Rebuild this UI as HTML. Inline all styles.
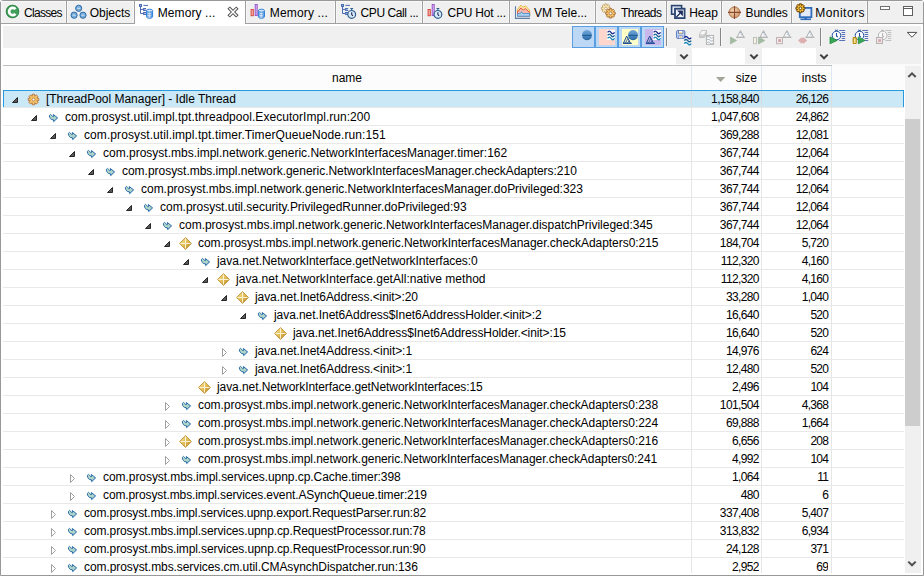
<!DOCTYPE html>
<html><head><meta charset="utf-8"><title>Memory Call Tree</title>
<style>
html,body{margin:0;padding:0;}
body{width:924px;height:576px;overflow:hidden;background:#fff;position:relative;font-family:"Liberation Sans",sans-serif;font-size:12px;color:#000;}
body>div,body>svg{position:absolute;box-sizing:content-box;}
.t{white-space:nowrap;}
svg{overflow:visible;}
</style></head><body><svg width="0" height="0" style="left:0;top:0"><defs><linearGradient id="dbg" x1="0" y1="0" x2="1" y2="0"><stop offset="0" stop-color="#5a9ce0"/><stop offset=".45" stop-color="#eef5fd"/><stop offset="1" stop-color="#3a86da"/></linearGradient><linearGradient id="dbg2" x1="0" y1="0" x2="1" y2="0"><stop offset="0" stop-color="#5a9ce0"/><stop offset=".45" stop-color="#eef5fd"/><stop offset="1" stop-color="#3a86da"/></linearGradient><radialGradient id="bg" cx=".4" cy=".4" r=".7"><stop offset="0" stop-color="#f8e0b8"/><stop offset="1" stop-color="#c88860"/></radialGradient><linearGradient id="sg" x1="0" y1="0" x2="0" y2="1"><stop offset="0" stop-color="#78a8d8"/><stop offset=".5" stop-color="#4a88c4"/><stop offset="1" stop-color="#2f70b0"/></linearGradient><linearGradient id="sg2" x1="0" y1="0" x2="0" y2="1"><stop offset="0" stop-color="#78a8d8"/><stop offset=".5" stop-color="#4a88c4"/><stop offset="1" stop-color="#2f70b0"/></linearGradient><linearGradient id="bl" x1="0" y1="0" x2="1" y2="1"><stop offset="0" stop-color="#c4e8c4"/><stop offset="1" stop-color="#9cc4cc"/></linearGradient><linearGradient id="dg" x1="0" y1="0" x2="1" y2="1"><stop offset="0" stop-color="#fbe8a4"/><stop offset=".5" stop-color="#e4be58"/><stop offset="1" stop-color="#b07e22"/></linearGradient></defs></svg><div style="left:0;top:0;width:922px;height:574px;border:1px solid #989898;border-radius:3px 3px 0 0;"></div><div style="left:1px;top:1px;width:922px;height:22px;background:#f0f0f0;"></div><div style="left:1px;top:1px;width:922px;height:1px;background:#f8f8f8;"></div><div style="left:1px;top:23px;width:922px;height:1px;background:#a0a0a0;"></div><div style="left:3px;top:26px;width:918px;height:22px;background:#f0f0f0;"></div><div style="left:3px;top:48px;width:918px;height:16px;background:#f0f0f0;"></div><div style="left:3px;top:64px;width:918px;height:2px;background:#fafafa;"></div><div style="left:3px;top:48px;width:673px;height:17px;background:#fff;"></div><div style="left:692px;top:48px;width:53px;height:17px;background:#fff;"></div><div style="left:762px;top:48px;width:54px;height:17px;background:#fff;"></div><div style="left:1px;top:1px;width:1px;height:22px;background:#f8f8f8;"></div><div style="left:65px;top:1px;width:1px;height:22px;background:#f8f8f8;"></div><div style="left:66px;top:1px;width:1px;height:23px;background:#a0a0a0;"></div><div class="t" style="left:24.0px;top:1px;line-height:24px;height:24px;letter-spacing:-0.68px;">Classes</div><div style="left:67px;top:1px;width:1px;height:22px;background:#f8f8f8;"></div><div style="left:133px;top:1px;width:1px;height:22px;background:#f8f8f8;"></div><div style="left:134px;top:1px;width:1px;height:23px;background:#a0a0a0;"></div><div class="t" style="left:89.7px;top:1px;line-height:24px;height:24px;">Objects</div><div style="left:135px;top:1px;width:110px;height:25px;background:#fff;"></div><div style="left:245px;top:1px;width:1px;height:23px;background:#a0a0a0;"></div><div class="t" style="left:157.7px;top:1px;line-height:24px;height:24px;letter-spacing:0.1px;">Memory ...</div><div style="left:246px;top:1px;width:1px;height:22px;background:#f8f8f8;"></div><div style="left:334px;top:1px;width:1px;height:22px;background:#f8f8f8;"></div><div style="left:335px;top:1px;width:1px;height:23px;background:#a0a0a0;"></div><div class="t" style="left:269.8px;top:1px;line-height:24px;height:24px;letter-spacing:0.15px;">Memory ...</div><div style="left:336px;top:1px;width:1px;height:22px;background:#f8f8f8;"></div><div style="left:421px;top:1px;width:1px;height:22px;background:#f8f8f8;"></div><div style="left:422px;top:1px;width:1px;height:23px;background:#a0a0a0;"></div><div class="t" style="left:360.6px;top:1px;line-height:24px;height:24px;letter-spacing:-0.42px;">CPU Call ...</div><div style="left:423px;top:1px;width:1px;height:22px;background:#f8f8f8;"></div><div style="left:508px;top:1px;width:1px;height:22px;background:#f8f8f8;"></div><div style="left:509px;top:1px;width:1px;height:23px;background:#a0a0a0;"></div><div class="t" style="left:447.5px;top:1px;line-height:24px;height:24px;letter-spacing:-0.22px;">CPU Hot ...</div><div style="left:510px;top:1px;width:1px;height:22px;background:#f8f8f8;"></div><div style="left:594px;top:1px;width:1px;height:22px;background:#f8f8f8;"></div><div style="left:595px;top:1px;width:1px;height:23px;background:#a0a0a0;"></div><div class="t" style="left:534.0px;top:1px;line-height:24px;height:24px;">VM Tele...</div><div style="left:596px;top:1px;width:1px;height:22px;background:#f8f8f8;"></div><div style="left:665px;top:1px;width:1px;height:22px;background:#f8f8f8;"></div><div style="left:666px;top:1px;width:1px;height:23px;background:#a0a0a0;"></div><div class="t" style="left:621.0px;top:1px;line-height:24px;height:24px;letter-spacing:-0.5px;">Threads</div><div style="left:667px;top:1px;width:1px;height:22px;background:#f8f8f8;"></div><div style="left:720px;top:1px;width:1px;height:22px;background:#f8f8f8;"></div><div style="left:721px;top:1px;width:1px;height:23px;background:#a0a0a0;"></div><div class="t" style="left:689.2px;top:1px;line-height:24px;height:24px;">Heap</div><div style="left:722px;top:1px;width:1px;height:22px;background:#f8f8f8;"></div><div style="left:790px;top:1px;width:1px;height:22px;background:#f8f8f8;"></div><div style="left:791px;top:1px;width:1px;height:23px;background:#a0a0a0;"></div><div class="t" style="left:745.6px;top:1px;line-height:24px;height:24px;letter-spacing:-0.2px;">Bundles</div><div style="left:792px;top:1px;width:1px;height:22px;background:#f8f8f8;"></div><div style="left:866px;top:1px;width:1px;height:22px;background:#f8f8f8;"></div><div style="left:867px;top:1px;width:1px;height:23px;background:#a0a0a0;"></div><div class="t" style="left:815.3px;top:1px;line-height:24px;height:24px;letter-spacing:0.45px;">Monitors</div><svg style="left:5px;top:4px" width="15" height="15" viewBox="0 0 15 15"><circle cx="7.5" cy="7.5" r="6.7" fill="#43a05c"/><circle cx="7.5" cy="7.5" r="6.2" fill="none" stroke="#2f8848" stroke-width="1"/><path d="M10.5 5.2 A3.6 3.6 0 1 0 10.5 9.8" fill="none" stroke="#fff" stroke-width="2.7"/></svg><svg style="left:70px;top:4px" width="17" height="15" viewBox="0 0 17 15"><circle cx="8.7" cy="4.3" r="3.1" fill="#79addb" stroke="#2f6ea8" stroke-width="1"/><path d="M7.199999999999999 4.3 H10.2" stroke="#cfe2f4" stroke-width="1"/><circle cx="4.1" cy="11.2" r="3.1" fill="#79addb" stroke="#2f6ea8" stroke-width="1"/><path d="M2.5999999999999996 11.2 H5.6" stroke="#cfe2f4" stroke-width="1"/><circle cx="13" cy="11.2" r="3.1" fill="#79addb" stroke="#2f6ea8" stroke-width="1"/><path d="M11.5 11.2 H14.5" stroke="#cfe2f4" stroke-width="1"/></svg><svg style="left:139px;top:4px" width="15" height="15" viewBox="0 0 15 15"><g transform="translate(0,0)"><path d="M1.5 3 V9.5 H4.5 M1.5 5.4 H4.5 M4.4 1.4 H9" fill="none" stroke="#4a6cb0" stroke-width="1"/><rect x="0.5" y="0.5" width="2" height="2" fill="#9ab0dc" stroke="#4a6cb0" stroke-width="1"/><rect x="4.6" y="4.5" width="2" height="2" fill="#9ab0dc" stroke="#4a6cb0" stroke-width="1"/><rect x="4.6" y="8.5" width="2" height="2" fill="#9ab0dc" stroke="#4a6cb0" stroke-width="1"/></g><g transform="translate(7,4.7)"><path d="M0.5 2 V7.8 C0.5 10.2 6.6 10.2 6.6 7.8 V2 Z" fill="url(#dbg)" stroke="#2f82d8" stroke-width="1"/><ellipse cx="3.55" cy="2" rx="3.05" ry="1.5" fill="#d4e6f8" stroke="#2f82d8" stroke-width="1"/><path d="M0.8 5 C2 6.2 5 6.2 6.3 5 M0.8 7.4 C2 8.6 5 8.6 6.3 7.4" fill="none" stroke="#3a86da" stroke-width=".6" opacity=".7"/></g></svg><svg style="left:250px;top:4px" width="16" height="15" viewBox="0 0 16 15"><g transform="translate(0.6,0)"><rect x="0.5" y="5.5" width="2.2" height="6.2" fill="#f8b8b0" stroke="#d8483c" stroke-width="1"/><rect x="4.6" y="0.5" width="2" height="11" fill="#d8b8f0" stroke="#9a58cc" stroke-width="1"/></g><g transform="translate(7.9,4.7)"><path d="M0.5 2 V7.8 C0.5 10.2 6.6 10.2 6.6 7.8 V2 Z" fill="url(#dbg2)" stroke="#2f82d8" stroke-width="1"/><ellipse cx="3.55" cy="2" rx="3.05" ry="1.5" fill="#d4e6f8" stroke="#2f82d8" stroke-width="1"/><path d="M0.8 5 C2 6.2 5 6.2 6.3 5 M0.8 7.4 C2 8.6 5 8.6 6.3 7.4" fill="none" stroke="#3a86da" stroke-width=".6" opacity=".7"/></g></svg><svg style="left:341px;top:4px" width="16" height="15" viewBox="0 0 16 15"><g transform="translate(0,0)"><path d="M1.5 3 V9.5 H4.5 M1.5 5.4 H4.5 M4.4 1.4 H9" fill="none" stroke="#4a6cb0" stroke-width="1"/><rect x="0.5" y="0.5" width="2" height="2" fill="#9ab0dc" stroke="#4a6cb0" stroke-width="1"/><rect x="4.6" y="4.5" width="2" height="2" fill="#9ab0dc" stroke="#4a6cb0" stroke-width="1"/><rect x="4.6" y="8.5" width="2" height="2" fill="#9ab0dc" stroke="#4a6cb0" stroke-width="1"/></g><g transform="translate(6.2,4)"><path d="M3.1 0.5 H5.9 M4.5 0.5 V2.2" stroke="#2b5f90" stroke-width="1.1"/><circle cx="4.5" cy="6.4" r="3.9" fill="#dbeaf8" stroke="#2b5f90" stroke-width="1.2"/><path d="M4.5 4.2 V6.6 L5.7 7.8" fill="none" stroke="#1a2a5a" stroke-width="1.1"/></g></svg><svg style="left:427px;top:4px" width="16" height="15" viewBox="0 0 16 15"><g transform="translate(0.6,0)"><rect x="0.5" y="5.5" width="2.2" height="6.2" fill="#f8b8b0" stroke="#d8483c" stroke-width="1"/><rect x="4.6" y="0.5" width="2" height="11" fill="#d8b8f0" stroke="#9a58cc" stroke-width="1"/></g><g transform="translate(6.4,4)"><path d="M3.1 0.5 H5.9 M4.5 0.5 V2.2" stroke="#2b5f90" stroke-width="1.1"/><circle cx="4.5" cy="6.4" r="3.9" fill="#dbeaf8" stroke="#2b5f90" stroke-width="1.2"/><path d="M4.5 4.2 V6.6 L5.7 7.8" fill="none" stroke="#1a2a5a" stroke-width="1.1"/></g></svg><svg style="left:515px;top:4px" width="16" height="15" viewBox="0 0 16 15"><path d="M2.5 12.2 V5.4 L5.9 1.2 L8.1 3.4 L10.4 1.9 L14.6 6.2 V12.2 Z" fill="#fcecb0" stroke="#e6b434" stroke-width="1"/><path d="M2.5 12.2 V8 L5.9 3.9 L8.1 6 L10.4 4.6 L14.6 8.4 V12.2 Z" fill="#f9b8ac" stroke="#e05446" stroke-width="1"/><path d="M2.5 12.2 V9.8 L5.4 9.6 L6.5 7.6 L7.7 9.6 L14.6 9.4 V12.2 Z" fill="#b0d4f2" stroke="#5696d0" stroke-width="1"/><path d="M0.5 2.2 V14.4 H15" fill="none" stroke="#5a7ea8" stroke-width="1.1"/></svg><svg style="left:600px;top:3px" width="17" height="17" viewBox="0 0 17 17"><g opacity="0.95"><path d="M4.99 0.89 L6.81 0.89 L7.14 2.63 L6.98 2.56 L8.44 1.57 L9.73 2.86 L8.74 4.32 L8.67 4.16 L10.41 4.49 L10.41 6.31 L8.67 6.64 L8.74 6.48 L9.73 7.94 L8.44 9.23 L6.98 8.24 L7.14 8.17 L6.81 9.91 L4.99 9.91 L4.66 8.17 L4.82 8.24 L3.36 9.23 L2.07 7.94 L3.06 6.48 L3.13 6.64 L1.39 6.31 L1.39 4.49 L3.13 4.16 L3.06 4.32 L2.07 2.86 L3.36 1.57 L4.82 2.56 L4.66 2.63 Z" fill="#fbecb4" stroke="#c09c68" stroke-width="0.9" stroke-linejoin="round"/><circle cx="5.9" cy="5.4" r="1.3" fill="#fff" stroke="#c09c68" stroke-width="0.9"/></g><g opacity="1"><path d="M9.53 5.50 L11.47 5.50 L11.82 7.35 L11.66 7.28 L13.21 6.22 L14.58 7.59 L13.52 9.14 L13.45 8.98 L15.30 9.33 L15.30 11.27 L13.45 11.62 L13.52 11.46 L14.58 13.01 L13.21 14.38 L11.66 13.32 L11.82 13.25 L11.47 15.10 L9.53 15.10 L9.18 13.25 L9.34 13.32 L7.79 14.38 L6.42 13.01 L7.48 11.46 L7.55 11.62 L5.70 11.27 L5.70 9.33 L7.55 8.98 L7.48 9.14 L6.42 7.59 L7.79 6.22 L9.34 7.28 L9.18 7.35 Z" fill="#f6c868" stroke="#a86c3c" stroke-width="0.9" stroke-linejoin="round"/><circle cx="10.5" cy="10.3" r="1.5" fill="#fff" stroke="#a86c3c" stroke-width="0.9"/></g></svg><svg style="left:670px;top:4px" width="16" height="16" viewBox="0 0 16 16"><rect x="1.6" y="1.6" width="10" height="8.6" fill="#e8eef8" stroke="#2a4470" stroke-width="1.6"/><rect x="5" y="4.7" width="9.6" height="9.4" fill="#f2f6fc" stroke="#2a4470" stroke-width="1.8"/><path d="M6.4 13 L11.4 8 M8.6 7.2 H12.2 V10.8 Z" fill="#1a2a58" stroke="#1a2a58" stroke-width="1.2"/></svg><svg style="left:728px;top:6px" width="14" height="14" viewBox="0 0 14 14"><circle cx="6.5" cy="6.4" r="5.5" fill="url(#bg)" stroke="#b07850" stroke-width="1"/><path d="M6.5 0 V13 M0 6.4 H13" stroke="#8a4830" stroke-width="1.1"/></svg><svg style="left:796px;top:3px" width="17" height="18" viewBox="0 0 17 18"><rect x="3.8" y="4.9" width="11.6" height="9.3" fill="#e2eafa" stroke="#2f6cbc" stroke-width="1.8"/><path d="M4.4 16.3 H15" stroke="#2f6cbc" stroke-width="1.6"/><path d="M8.4 14.5 H11 V16 H8.4Z" fill="#2f6cbc"/><g opacity="1"><path d="M3.49 0.79 L5.31 0.79 L5.64 2.53 L5.48 2.46 L6.94 1.47 L8.23 2.76 L7.24 4.22 L7.17 4.06 L8.91 4.39 L8.91 6.21 L7.17 6.54 L7.24 6.38 L8.23 7.84 L6.94 9.13 L5.48 8.14 L5.64 8.07 L5.31 9.81 L3.49 9.81 L3.16 8.07 L3.32 8.14 L1.86 9.13 L0.57 7.84 L1.56 6.38 L1.63 6.54 L-0.11 6.21 L-0.11 4.39 L1.63 4.06 L1.56 4.22 L0.57 2.76 L1.86 1.47 L3.32 2.46 L3.16 2.53 Z" fill="#f6be28" stroke="#6a4210" stroke-width="1.0" stroke-linejoin="round"/><circle cx="4.4" cy="5.3" r="1.3" fill="#fff" stroke="#6a4210" stroke-width="1.0"/></g></svg><svg style="left:228px;top:7px" width="10" height="10" viewBox="0 0 10 10"><path d="M1.8 1.8 L8.2 8.2 M8.2 1.8 L1.8 8.2" stroke="#505050" stroke-width="3.4" stroke-linecap="square"/><path d="M1.8 1.8 L8.2 8.2 M8.2 1.8 L1.8 8.2" stroke="#fff" stroke-width="1.5" stroke-linecap="square"/></svg><svg style="left:880px;top:5px" width="11" height="6" viewBox="0 0 11 6"><rect x="0.5" y="1.5" width="9" height="3" fill="#fff" stroke="#707070" stroke-width="1"/></svg><svg style="left:902px;top:5px" width="12" height="12" viewBox="0 0 12 12"><rect x="1.5" y="1.5" width="9" height="9" fill="#fff" stroke="#606060" stroke-width="1"/><path d="M1.5 3.5 H10.5" stroke="#606060" stroke-width="1"/></svg><div style="left:572px;top:26px;width:21px;height:20px;background:#bcd8f4;border:1px solid #5a9ee2;"></div><div style="left:595px;top:26px;width:21px;height:20px;background:#bcd8f4;border:1px solid #5a9ee2;"></div><div style="left:618px;top:26px;width:21px;height:20px;background:#bcd8f4;border:1px solid #5a9ee2;"></div><div style="left:641px;top:26px;width:21px;height:20px;background:#bcd8f4;border:1px solid #5a9ee2;"></div><svg style="left:582px;top:30px" width="10" height="10" viewBox="0 0 10 10"><g transform="translate(0,0)"><circle cx="5" cy="5" r="4.9" fill="url(#sg)"/><path d="M0.9 7.4 A4.7 4.7 0 0 0 9.1 7.4" fill="none" stroke="#1f5a90" stroke-width=".8"/><path d="M0.3 5.4 H9.7" stroke="#1f5a8c" stroke-width="1"/></g></svg><svg style="left:599px;top:29px" width="17" height="17" viewBox="0 0 17 17"><rect x="0" y="0" width="16" height="16" fill="#ffd6cc"/><g transform="translate(8,1)"><rect x="0" y="0" width="8" height="10" fill="#fff"/><path d="M0.6 2.4 C1.8 0.7 2.8 0.7 4 2.4 S6.2 4.1 7.6 2.4" fill="none" stroke="#1c2c92" stroke-width="1.4"/><path d="M0.6 5.4 C1.8 3.7 2.8 3.7 4 5.4 S6.2 7.1000000000000005 7.6 5.4" fill="none" stroke="#1c6092" stroke-width="1.4"/><path d="M0.6 8.4 C1.8 6.7 2.8 6.7 4 8.4 S6.2 10.1 7.6 8.4" fill="none" stroke="#1c88b8" stroke-width="1.4"/></g></svg><svg style="left:622px;top:29px" width="17" height="17" viewBox="0 0 17 17"><rect x="0" y="0" width="16" height="16" fill="#ffffc8"/><g transform="translate(6,1)"><circle cx="5" cy="5" r="4.9" fill="url(#sg2)"/><path d="M0.9 7.4 A4.7 4.7 0 0 0 9.1 7.4" fill="none" stroke="#1f5a90" stroke-width=".8"/><path d="M0.3 5.4 H9.7" stroke="#1f5a8c" stroke-width="1"/></g><g transform="translate(1,6.6)"><path d="M3.7 0.5 L7.5 7.6 H0.4 Z" fill="none" stroke="#1c4a94" stroke-width="1"/><path d="M4.9 2.6 L2.5 7.4 M6.1 4.8 L4.7 7.4" stroke="#1c4a94" stroke-width=".8"/><path d="M0 7.7 H8.9" stroke="#1c4a94" stroke-width="1.1"/></g></svg><svg style="left:645px;top:29px" width="17" height="17" viewBox="0 0 17 17"><rect x="0" y="0" width="16" height="16" fill="#c9b6ea"/><g transform="translate(8,1)"><rect x="0" y="0" width="8" height="10" fill="#fff"/><path d="M0.6 2.4 C1.8 0.7 2.8 0.7 4 2.4 S6.2 4.1 7.6 2.4" fill="none" stroke="#1c2c92" stroke-width="1.4"/><path d="M0.6 5.4 C1.8 3.7 2.8 3.7 4 5.4 S6.2 7.1000000000000005 7.6 5.4" fill="none" stroke="#1c6092" stroke-width="1.4"/><path d="M0.6 8.4 C1.8 6.7 2.8 6.7 4 8.4 S6.2 10.1 7.6 8.4" fill="none" stroke="#1c88b8" stroke-width="1.4"/></g><g transform="translate(1,6.6)"><path d="M3.7 0.5 L7.5 7.6 H0.4 Z" fill="none" stroke="#1c4a94" stroke-width="1"/><path d="M4.9 2.6 L2.5 7.4 M6.1 4.8 L4.7 7.4" stroke="#1c4a94" stroke-width=".8"/><path d="M0 7.7 H8.9" stroke="#1c4a94" stroke-width="1.1"/></g></svg><div style="left:666px;top:28px;width:1px;height:18px;background:#868686;"></div><div style="left:667px;top:28px;width:1px;height:18px;background:#f8f8f8;"></div><div style="left:720px;top:28px;width:1px;height:18px;background:#868686;"></div><div style="left:721px;top:28px;width:1px;height:18px;background:#f8f8f8;"></div><div style="left:820px;top:28px;width:1px;height:18px;background:#868686;"></div><div style="left:821px;top:28px;width:1px;height:18px;background:#f8f8f8;"></div><svg style="left:676px;top:30px" width="16" height="16" viewBox="0 0 16 16"><rect x="7.6" y="5.4" width="8" height="10" fill="#fafafa"/><rect x="0.6" y="0.5" width="8.2" height="8" rx="1.2" fill="#c8d8f4" stroke="#5674ba" stroke-width="1"/><path d="M2.5 0.8 V3.6 H6.9 V0.8" fill="#fff" stroke="#4c6ab2" stroke-width=".8"/><path d="M3 3 H6.4" stroke="#e8c068" stroke-width="1"/><path d="M2.6 8.3 V5.6 H6.8 V8.3" fill="#dfe8f8" stroke="#6a84c4" stroke-width=".7"/><rect x="4.1" y="6.4" width="1.2" height="1.2" fill="#f0c040"/><path d="M8.3 7.6 C9.6 6 10.6 6 11.8 7.6 S14 9.2 15.2 7.6" fill="none" stroke="#1c2c92" stroke-width="1.5"/><path d="M8.3 10.6 C9.6 9 10.6 9 11.8 10.6 S14 12.2 15.2 10.6" fill="none" stroke="#1c6092" stroke-width="1.5"/><path d="M8.3 13.6 C9.6 12 10.6 12 11.8 13.6 S14 15.2 15.2 13.6" fill="none" stroke="#1c88b8" stroke-width="1.5"/></svg><svg style="left:699px;top:30px" width="16" height="16" viewBox="0 0 16 16"><path d="M2.6 0.6 H7.6 L7.2 4.2 L5.4 7.4 H0.5 V4.4 Z" fill="#d0d0d0" stroke="#b8b8b8" stroke-width=".8"/><path d="M3 1 H7.2 L4.8 4.2 H1 Z" fill="#f8f8f8"/><rect x="7.4" y="5.4" width="7.2" height="9" fill="#fafafa" stroke="#b4b4b4" stroke-width="1"/><path d="M7.8 7.4 C8.8 6.2 9.8 6.2 11 7.4 S13 8.6 14.2 7.4 M7.8 10.2 C8.8 9 9.8 9 11 10.2 S13 11.4 14.2 10.2 M7.8 13 C8.8 11.8 9.8 11.8 11 13 S13 14.2 14.2 13" fill="none" stroke="#a4acb8" stroke-width="1"/></svg><svg style="left:730px;top:30px" width="17" height="16" viewBox="0 0 17 16"><path d="M0.4 7 L6.6 10.5 L0.4 14 Z" fill="#a4bca4" stroke="#98b098" stroke-width=".6"/><g transform="translate(6,0)"><path d="M4.5 0.6 L8 7.2 H1 Z" fill="#f6f6f6" stroke="#b0b0b0" stroke-width="1"/><path d="M0 7.4 H9" stroke="#b4b4b4" stroke-width="1"/><path d="M4.5 2 L6 6" stroke="#9fb4d0" stroke-width="1.2" stroke-dasharray="1 1"/></g></svg><svg style="left:753px;top:30px" width="17" height="16" viewBox="0 0 17 16"><rect x="0.5" y="7.5" width="3" height="6.2" fill="#f4f2e4" stroke="#c0c0b8" stroke-width="1"/><path d="M5.4 7 L11.8 10.5 L5.4 14 Z" fill="#a4bca4" stroke="#98b098" stroke-width=".6"/><g transform="translate(6,0)"><path d="M4.5 0.6 L8 7.2 H1 Z" fill="#f6f6f6" stroke="#b0b0b0" stroke-width="1"/><path d="M0 7.4 H9" stroke="#b4b4b4" stroke-width="1"/><path d="M4.5 2 L6 6" stroke="#9fb4d0" stroke-width="1.2" stroke-dasharray="1 1"/></g></svg><svg style="left:776px;top:30px" width="17" height="16" viewBox="0 0 17 16"><rect x="0.5" y="7.5" width="6" height="6.2" fill="#f2eaea" stroke="#beb6b6" stroke-width="1"/><rect x="2.2" y="9.2" width="2.8" height="2.8" fill="#d4a4a8"/><g transform="translate(6.4,0)"><path d="M4.5 0.6 L8 7.2 H1 Z" fill="#f6f6f6" stroke="#b0b0b0" stroke-width="1"/><path d="M0 7.4 H9" stroke="#b4b4b4" stroke-width="1"/><path d="M4.5 2 L6 6" stroke="#9fb4d0" stroke-width="1.2" stroke-dasharray="1 1"/></g></svg><svg style="left:798px;top:30px" width="17" height="16" viewBox="0 0 17 16"><path d="M0 10.5 L3.6 7.2 L4.6 8.2 L5.6 7.2 L9.2 10.5 L5.6 13.8 L4.6 12.8 L3.6 13.8 Z" fill="#dcb0b0"/><g transform="translate(7.4,0)"><path d="M4.5 0.6 L8 7.2 H1 Z" fill="#f6f6f6" stroke="#b0b0b0" stroke-width="1"/><path d="M0 7.4 H9" stroke="#b4b4b4" stroke-width="1"/><path d="M4.5 2 L6 6" stroke="#9fb4d0" stroke-width="1.2" stroke-dasharray="1 1"/></g></svg><svg style="left:829px;top:29px" width="17" height="16" viewBox="0 0 17 16"><path d="M6.2 0.9 L8.8 2.3 M8.8 0.9 L6.2 2.3" stroke="#1f4ea0" stroke-width=".9"/><circle cx="7.5" cy="6.5" r="4.3" fill="#fff" stroke="#1f4ea0" stroke-width="1"/><path d="M7.5 4 V7 L8.9 8.2" fill="none" stroke="#1f4ea0" stroke-width="1.1"/><path d="M10.2 1.5 H16.2 M12.7 3.5 H16.2 M12.7 5.5 H16.2 M12.7 7.5 H16.2 M12.7 9.5 H16.2 M10.2 11.5 H16.2 " stroke="#5874b8" stroke-width="1"/><path d="M1 7.9 L8.2 11.4 L1 14.8 Z" fill="#3aa858" stroke="#1f8a3c" stroke-width=".8"/></svg><svg style="left:852px;top:29px" width="17" height="16" viewBox="0 0 17 16"><path d="M6.2 0.9 L8.8 2.3 M8.8 0.9 L6.2 2.3" stroke="#1f4ea0" stroke-width=".9"/><circle cx="7.5" cy="6.5" r="4.3" fill="#fff" stroke="#1f4ea0" stroke-width="1"/><path d="M7.5 4 V7 L8.9 8.2" fill="none" stroke="#1f4ea0" stroke-width="1.1"/><path d="M10.2 1.5 H16.2 M12.7 3.5 H16.2 M12.7 5.5 H16.2 M12.7 7.5 H16.2 M12.7 9.5 H16.2 M10.2 11.5 H16.2 " stroke="#5874b8" stroke-width="1"/><rect x="1.2" y="8.6" width="3" height="5.9" rx=".8" fill="#fbe9a0" stroke="#b8860c" stroke-width="1.2"/><path d="M6.3 7.9 L13 11.4 L6.3 14.8 Z" fill="#3aa858" stroke="#1f8a3c" stroke-width=".8"/></svg><svg style="left:876px;top:29px" width="17" height="16" viewBox="0 0 17 16"><path d="M5.3 0.9 L7.8999999999999995 2.3 M7.8999999999999995 0.9 L5.3 2.3" stroke="#b4b4b4" stroke-width=".9"/><circle cx="6.6" cy="6.5" r="4.3" fill="#f8f8f8" stroke="#b4b4b4" stroke-width="1"/><path d="M6.6 4 V7 L8.0 8.2" fill="none" stroke="#b4b4b4" stroke-width="1.1"/><path d="M9.3 1.5 H15.299999999999999 M11.8 3.5 H15.299999999999999 M11.8 5.5 H15.299999999999999 M11.8 7.5 H15.299999999999999 M11.8 9.5 H15.299999999999999 M9.3 11.5 H15.299999999999999 " stroke="#c0c0c0" stroke-width="1"/><rect x="0.5" y="8.5" width="6" height="6" fill="#ece6e6" stroke="#b8b2b2" stroke-width="1"/><rect x="2.2" y="10.2" width="2.8" height="2.8" fill="#d4acb0"/></svg><svg style="left:906px;top:31px" width="12" height="8" viewBox="0 0 12 8"><path d="M1.2 1.4 H10.8 L6 6.2 Z" fill="#fff" stroke="#505050" stroke-width="1"/></svg><svg style="left:678.6px;top:53px" width="10" height="8" viewBox="0 0 10 8"><path d="M1.3 1.6 L5 5.3 L8.7 1.6" fill="none" stroke="#404040" stroke-width="2"/></svg><svg style="left:748.6px;top:53px" width="10" height="8" viewBox="0 0 10 8"><path d="M1.3 1.6 L5 5.3 L8.7 1.6" fill="none" stroke="#404040" stroke-width="2"/></svg><svg style="left:818.6px;top:53px" width="10" height="8" viewBox="0 0 10 8"><path d="M1.3 1.6 L5 5.3 L8.7 1.6" fill="none" stroke="#404040" stroke-width="2"/></svg><div style="left:3px;top:65px;width:829px;height:1px;background:#c0c0c0;"></div><div style="left:3px;top:66px;width:902px;height:23px;background:#fcfcfc;"></div><div style="left:691px;top:66px;width:1px;height:507px;background:#e6e6e6;"></div><div style="left:691px;top:66px;width:1px;height:23px;background:#dce8f4;"></div><div style="left:761px;top:66px;width:1px;height:507px;background:#e6e6e6;"></div><div style="left:761px;top:66px;width:1px;height:23px;background:#dce8f4;"></div><div style="left:831px;top:66px;width:1px;height:507px;background:#e6e6e6;"></div><div style="left:831px;top:66px;width:1px;height:23px;background:#dce8f4;"></div><div class="t" style="left:3px;top:66px;line-height:24px;height:24px;width:688px;text-align:center;">name</div><div class="t" style="left:692px;top:66px;line-height:24px;height:24px;width:65px;text-align:right;">size</div><div class="t" style="left:762px;top:66px;line-height:24px;height:24px;width:64.5px;text-align:right;">insts</div><svg style="left:716px;top:77px" width="10" height="6" viewBox="0 0 10 6"><path d="M0 0 H9.4 L4.7 5 Z" fill="#a4a498"/></svg><div style="left:3px;top:90px;width:899px;height:16px;background:#cbe8f6;border:1px solid #2a98dc;border-bottom:0"></div><div style="left:691px;top:91px;width:1px;height:16px;background:#dcdcdc;"></div><div style="left:761px;top:91px;width:1px;height:16px;background:#dcdcdc;"></div><div style="left:831px;top:91px;width:1px;height:16px;background:#dcdcdc;"></div><div style="left:3px;top:107px;width:901px;height:1px;background:#e8e8e8;"></div><svg style="left:11px;top:96px" width="8" height="8" viewBox="0 0 8 8"><path d="M6.5 1.5 L6.5 6.5 L1.5 6.5 Z" fill="#595959" stroke="#262626" stroke-width="1" stroke-linejoin="miter"/></svg><svg style="left:28px;top:94px" width="11" height="11" viewBox="0 0 11 11"><g opacity="1"><path d="M4.43 0.21 L6.57 0.21 L6.95 2.25 L6.77 2.17 L8.48 1.00 L10.00 2.52 L8.83 4.23 L8.75 4.05 L10.79 4.43 L10.79 6.57 L8.75 6.95 L8.83 6.77 L10.00 8.48 L8.48 10.00 L6.77 8.83 L6.95 8.75 L6.57 10.79 L4.43 10.79 L4.05 8.75 L4.23 8.83 L2.52 10.00 L1.00 8.48 L2.17 6.77 L2.25 6.95 L0.21 6.57 L0.21 4.43 L2.25 4.05 L2.17 4.23 L1.00 2.52 L2.52 1.00 L4.23 2.17 L4.05 2.25 Z" fill="#f8c868" stroke="#b87848" stroke-width="1.0" stroke-linejoin="round"/><circle cx="5.5" cy="5.5" r="1.5" fill="#fff" stroke="#b87848" stroke-width="1.0"/></g></svg><div class="t" style="left:46px;top:90px;line-height:18px;height:18px;letter-spacing:-0.021px;">[ThreadPool Manager] - Idle Thread</div><div class="t" style="left:692px;top:90px;line-height:18px;height:18px;width:66.9px;text-align:right;letter-spacing:-0.62px;">1,158,840</div><div class="t" style="left:762px;top:90px;line-height:18px;height:18px;width:66.3px;text-align:right;letter-spacing:-0.7px;">26,126</div><div style="left:3px;top:125px;width:901px;height:1px;background:#e8e8e8;"></div><svg style="left:30px;top:114px" width="8" height="8" viewBox="0 0 8 8"><path d="M6.5 1.5 L6.5 6.5 L1.5 6.5 Z" fill="#595959" stroke="#262626" stroke-width="1" stroke-linejoin="miter"/></svg><svg style="left:49px;top:114px" width="10" height="9" viewBox="0 0 10 9"><path d="M4.3 0.5 L8.6 3.9 L4.7 7.6 L4.5 5.9 C2 5.9 0.4 4 0.4 1.4 L1.5 0.4 L2.7 1.5 C2.9 2.4 3.4 2.8 4.4 2.7 Z" fill="url(#bl)" stroke="#2366a8" stroke-width="1" stroke-linejoin="round"/></svg><div class="t" style="left:65px;top:108px;line-height:18px;height:18px;letter-spacing:0.043px;">com.prosyst.util.impl.tpt.threadpool.ExecutorImpl.run:200</div><div class="t" style="left:692px;top:108px;line-height:18px;height:18px;width:66.9px;text-align:right;letter-spacing:-0.62px;">1,047,608</div><div class="t" style="left:762px;top:108px;line-height:18px;height:18px;width:66.3px;text-align:right;letter-spacing:-0.7px;">24,862</div><div style="left:3px;top:143px;width:901px;height:1px;background:#e8e8e8;"></div><svg style="left:49px;top:132px" width="8" height="8" viewBox="0 0 8 8"><path d="M6.5 1.5 L6.5 6.5 L1.5 6.5 Z" fill="#595959" stroke="#262626" stroke-width="1" stroke-linejoin="miter"/></svg><svg style="left:68px;top:132px" width="10" height="9" viewBox="0 0 10 9"><path d="M4.3 0.5 L8.6 3.9 L4.7 7.6 L4.5 5.9 C2 5.9 0.4 4 0.4 1.4 L1.5 0.4 L2.7 1.5 C2.9 2.4 3.4 2.8 4.4 2.7 Z" fill="url(#bl)" stroke="#2366a8" stroke-width="1" stroke-linejoin="round"/></svg><div class="t" style="left:84px;top:126px;line-height:18px;height:18px;letter-spacing:0.087px;">com.prosyst.util.impl.tpt.timer.TimerQueueNode.run:151</div><div class="t" style="left:692px;top:126px;line-height:18px;height:18px;width:66.9px;text-align:right;letter-spacing:-0.62px;">369,288</div><div class="t" style="left:762px;top:126px;line-height:18px;height:18px;width:66.3px;text-align:right;letter-spacing:-0.7px;">12,081</div><div style="left:3px;top:161px;width:901px;height:1px;background:#e8e8e8;"></div><svg style="left:68px;top:150px" width="8" height="8" viewBox="0 0 8 8"><path d="M6.5 1.5 L6.5 6.5 L1.5 6.5 Z" fill="#595959" stroke="#262626" stroke-width="1" stroke-linejoin="miter"/></svg><svg style="left:87px;top:150px" width="10" height="9" viewBox="0 0 10 9"><path d="M4.3 0.5 L8.6 3.9 L4.7 7.6 L4.5 5.9 C2 5.9 0.4 4 0.4 1.4 L1.5 0.4 L2.7 1.5 C2.9 2.4 3.4 2.8 4.4 2.7 Z" fill="url(#bl)" stroke="#2366a8" stroke-width="1" stroke-linejoin="round"/></svg><div class="t" style="left:103px;top:144px;line-height:18px;height:18px;">com.prosyst.mbs.impl.network.generic.NetworkInterfacesManager.timer:162</div><div class="t" style="left:692px;top:144px;line-height:18px;height:18px;width:66.9px;text-align:right;letter-spacing:-0.62px;">367,744</div><div class="t" style="left:762px;top:144px;line-height:18px;height:18px;width:66.3px;text-align:right;letter-spacing:-0.7px;">12,064</div><div style="left:3px;top:179px;width:901px;height:1px;background:#e8e8e8;"></div><svg style="left:87px;top:168px" width="8" height="8" viewBox="0 0 8 8"><path d="M6.5 1.5 L6.5 6.5 L1.5 6.5 Z" fill="#595959" stroke="#262626" stroke-width="1" stroke-linejoin="miter"/></svg><svg style="left:106px;top:168px" width="10" height="9" viewBox="0 0 10 9"><path d="M4.3 0.5 L8.6 3.9 L4.7 7.6 L4.5 5.9 C2 5.9 0.4 4 0.4 1.4 L1.5 0.4 L2.7 1.5 C2.9 2.4 3.4 2.8 4.4 2.7 Z" fill="url(#bl)" stroke="#2366a8" stroke-width="1" stroke-linejoin="round"/></svg><div class="t" style="left:122px;top:162px;line-height:18px;height:18px;letter-spacing:-0.026px;">com.prosyst.mbs.impl.network.generic.NetworkInterfacesManager.checkAdapters:210</div><div class="t" style="left:692px;top:162px;line-height:18px;height:18px;width:66.9px;text-align:right;letter-spacing:-0.62px;">367,744</div><div class="t" style="left:762px;top:162px;line-height:18px;height:18px;width:66.3px;text-align:right;letter-spacing:-0.7px;">12,064</div><div style="left:3px;top:197px;width:901px;height:1px;background:#e8e8e8;"></div><svg style="left:106px;top:186px" width="8" height="8" viewBox="0 0 8 8"><path d="M6.5 1.5 L6.5 6.5 L1.5 6.5 Z" fill="#595959" stroke="#262626" stroke-width="1" stroke-linejoin="miter"/></svg><svg style="left:125px;top:186px" width="10" height="9" viewBox="0 0 10 9"><path d="M4.3 0.5 L8.6 3.9 L4.7 7.6 L4.5 5.9 C2 5.9 0.4 4 0.4 1.4 L1.5 0.4 L2.7 1.5 C2.9 2.4 3.4 2.8 4.4 2.7 Z" fill="url(#bl)" stroke="#2366a8" stroke-width="1" stroke-linejoin="round"/></svg><div class="t" style="left:141px;top:180px;line-height:18px;height:18px;letter-spacing:-0.021px;">com.prosyst.mbs.impl.network.generic.NetworkInterfacesManager.doPrivileged:323</div><div class="t" style="left:692px;top:180px;line-height:18px;height:18px;width:66.9px;text-align:right;letter-spacing:-0.62px;">367,744</div><div class="t" style="left:762px;top:180px;line-height:18px;height:18px;width:66.3px;text-align:right;letter-spacing:-0.7px;">12,064</div><div style="left:3px;top:215px;width:901px;height:1px;background:#e8e8e8;"></div><svg style="left:125px;top:204px" width="8" height="8" viewBox="0 0 8 8"><path d="M6.5 1.5 L6.5 6.5 L1.5 6.5 Z" fill="#595959" stroke="#262626" stroke-width="1" stroke-linejoin="miter"/></svg><svg style="left:144px;top:204px" width="10" height="9" viewBox="0 0 10 9"><path d="M4.3 0.5 L8.6 3.9 L4.7 7.6 L4.5 5.9 C2 5.9 0.4 4 0.4 1.4 L1.5 0.4 L2.7 1.5 C2.9 2.4 3.4 2.8 4.4 2.7 Z" fill="url(#bl)" stroke="#2366a8" stroke-width="1" stroke-linejoin="round"/></svg><div class="t" style="left:160px;top:198px;line-height:18px;height:18px;letter-spacing:-0.023px;">com.prosyst.util.security.PrivilegedRunner.doPrivileged:93</div><div class="t" style="left:692px;top:198px;line-height:18px;height:18px;width:66.9px;text-align:right;letter-spacing:-0.62px;">367,744</div><div class="t" style="left:762px;top:198px;line-height:18px;height:18px;width:66.3px;text-align:right;letter-spacing:-0.7px;">12,064</div><div style="left:3px;top:233px;width:901px;height:1px;background:#e8e8e8;"></div><svg style="left:144px;top:222px" width="8" height="8" viewBox="0 0 8 8"><path d="M6.5 1.5 L6.5 6.5 L1.5 6.5 Z" fill="#595959" stroke="#262626" stroke-width="1" stroke-linejoin="miter"/></svg><svg style="left:163px;top:222px" width="10" height="9" viewBox="0 0 10 9"><path d="M4.3 0.5 L8.6 3.9 L4.7 7.6 L4.5 5.9 C2 5.9 0.4 4 0.4 1.4 L1.5 0.4 L2.7 1.5 C2.9 2.4 3.4 2.8 4.4 2.7 Z" fill="url(#bl)" stroke="#2366a8" stroke-width="1" stroke-linejoin="round"/></svg><div class="t" style="left:179px;top:216px;line-height:18px;height:18px;letter-spacing:-0.014px;">com.prosyst.mbs.impl.network.generic.NetworkInterfacesManager.dispatchPrivileged:345</div><div class="t" style="left:692px;top:216px;line-height:18px;height:18px;width:66.9px;text-align:right;letter-spacing:-0.62px;">367,744</div><div class="t" style="left:762px;top:216px;line-height:18px;height:18px;width:66.3px;text-align:right;letter-spacing:-0.7px;">12,064</div><div style="left:3px;top:251px;width:901px;height:1px;background:#e8e8e8;"></div><svg style="left:163px;top:240px" width="8" height="8" viewBox="0 0 8 8"><path d="M6.5 1.5 L6.5 6.5 L1.5 6.5 Z" fill="#595959" stroke="#262626" stroke-width="1" stroke-linejoin="miter"/></svg><svg style="left:179px;top:237px" width="13" height="13" viewBox="0 0 13 13"><path d="M6.5 0.6 L12.4 6.5 L6.5 12.4 L0.6 6.5 Z" fill="url(#dg)" stroke="#c49838" stroke-width="1"/><path d="M6.5 1.5 V11.5 M1.5 6.5 H11.5" stroke="#fff8e0" stroke-width="1" opacity=".9"/></svg><div class="t" style="left:198px;top:234px;line-height:18px;height:18px;letter-spacing:-0.038px;">com.prosyst.mbs.impl.network.generic.NetworkInterfacesManager.checkAdapters0:215</div><div class="t" style="left:692px;top:234px;line-height:18px;height:18px;width:66.9px;text-align:right;letter-spacing:-0.62px;">184,704</div><div class="t" style="left:762px;top:234px;line-height:18px;height:18px;width:66.3px;text-align:right;letter-spacing:-0.7px;">5,720</div><div style="left:3px;top:269px;width:901px;height:1px;background:#e8e8e8;"></div><svg style="left:182px;top:258px" width="8" height="8" viewBox="0 0 8 8"><path d="M6.5 1.5 L6.5 6.5 L1.5 6.5 Z" fill="#595959" stroke="#262626" stroke-width="1" stroke-linejoin="miter"/></svg><svg style="left:201px;top:258px" width="10" height="9" viewBox="0 0 10 9"><path d="M4.3 0.5 L8.6 3.9 L4.7 7.6 L4.5 5.9 C2 5.9 0.4 4 0.4 1.4 L1.5 0.4 L2.7 1.5 C2.9 2.4 3.4 2.8 4.4 2.7 Z" fill="url(#bl)" stroke="#2366a8" stroke-width="1" stroke-linejoin="round"/></svg><div class="t" style="left:217px;top:252px;line-height:18px;height:18px;letter-spacing:-0.043px;">java.net.NetworkInterface.getNetworkInterfaces:0</div><div class="t" style="left:692px;top:252px;line-height:18px;height:18px;width:66.9px;text-align:right;letter-spacing:-0.62px;">112,320</div><div class="t" style="left:762px;top:252px;line-height:18px;height:18px;width:66.3px;text-align:right;letter-spacing:-0.7px;">4,160</div><div style="left:3px;top:287px;width:901px;height:1px;background:#e8e8e8;"></div><svg style="left:201px;top:276px" width="8" height="8" viewBox="0 0 8 8"><path d="M6.5 1.5 L6.5 6.5 L1.5 6.5 Z" fill="#595959" stroke="#262626" stroke-width="1" stroke-linejoin="miter"/></svg><svg style="left:217px;top:273px" width="13" height="13" viewBox="0 0 13 13"><path d="M6.5 0.6 L12.4 6.5 L6.5 12.4 L0.6 6.5 Z" fill="url(#dg)" stroke="#c49838" stroke-width="1"/><path d="M6.5 1.5 V11.5 M1.5 6.5 H11.5" stroke="#fff8e0" stroke-width="1" opacity=".9"/></svg><div class="t" style="left:236px;top:270px;line-height:18px;height:18px;letter-spacing:0.031px;">java.net.NetworkInterface.getAll:native method</div><div class="t" style="left:692px;top:270px;line-height:18px;height:18px;width:66.9px;text-align:right;letter-spacing:-0.62px;">112,320</div><div class="t" style="left:762px;top:270px;line-height:18px;height:18px;width:66.3px;text-align:right;letter-spacing:-0.7px;">4,160</div><div style="left:3px;top:305px;width:901px;height:1px;background:#e8e8e8;"></div><svg style="left:220px;top:294px" width="8" height="8" viewBox="0 0 8 8"><path d="M6.5 1.5 L6.5 6.5 L1.5 6.5 Z" fill="#595959" stroke="#262626" stroke-width="1" stroke-linejoin="miter"/></svg><svg style="left:236px;top:291px" width="13" height="13" viewBox="0 0 13 13"><path d="M6.5 0.6 L12.4 6.5 L6.5 12.4 L0.6 6.5 Z" fill="url(#dg)" stroke="#c49838" stroke-width="1"/><path d="M6.5 1.5 V11.5 M1.5 6.5 H11.5" stroke="#fff8e0" stroke-width="1" opacity=".9"/></svg><div class="t" style="left:255px;top:288px;line-height:18px;height:18px;letter-spacing:-0.08px;">java.net.Inet6Address.&lt;init&gt;:20</div><div class="t" style="left:692px;top:288px;line-height:18px;height:18px;width:66.9px;text-align:right;letter-spacing:-0.62px;">33,280</div><div class="t" style="left:762px;top:288px;line-height:18px;height:18px;width:66.3px;text-align:right;letter-spacing:-0.7px;">1,040</div><div style="left:3px;top:323px;width:901px;height:1px;background:#e8e8e8;"></div><svg style="left:239px;top:312px" width="8" height="8" viewBox="0 0 8 8"><path d="M6.5 1.5 L6.5 6.5 L1.5 6.5 Z" fill="#595959" stroke="#262626" stroke-width="1" stroke-linejoin="miter"/></svg><svg style="left:258px;top:312px" width="10" height="9" viewBox="0 0 10 9"><path d="M4.3 0.5 L8.6 3.9 L4.7 7.6 L4.5 5.9 C2 5.9 0.4 4 0.4 1.4 L1.5 0.4 L2.7 1.5 C2.9 2.4 3.4 2.8 4.4 2.7 Z" fill="url(#bl)" stroke="#2366a8" stroke-width="1" stroke-linejoin="round"/></svg><div class="t" style="left:274px;top:306px;line-height:18px;height:18px;letter-spacing:-0.067px;">java.net.Inet6Address$Inet6AddressHolder.&lt;init&gt;:2</div><div class="t" style="left:692px;top:306px;line-height:18px;height:18px;width:66.9px;text-align:right;letter-spacing:-0.62px;">16,640</div><div class="t" style="left:762px;top:306px;line-height:18px;height:18px;width:66.3px;text-align:right;letter-spacing:-0.7px;">520</div><div style="left:3px;top:341px;width:901px;height:1px;background:#e8e8e8;"></div><svg style="left:274px;top:327px" width="13" height="13" viewBox="0 0 13 13"><path d="M6.5 0.6 L12.4 6.5 L6.5 12.4 L0.6 6.5 Z" fill="url(#dg)" stroke="#c49838" stroke-width="1"/><path d="M6.5 1.5 V11.5 M1.5 6.5 H11.5" stroke="#fff8e0" stroke-width="1" opacity=".9"/></svg><div class="t" style="left:293px;top:324px;line-height:18px;height:18px;letter-spacing:-0.092px;">java.net.Inet6Address$Inet6AddressHolder.&lt;init&gt;:15</div><div class="t" style="left:692px;top:324px;line-height:18px;height:18px;width:66.9px;text-align:right;letter-spacing:-0.62px;">16,640</div><div class="t" style="left:762px;top:324px;line-height:18px;height:18px;width:66.3px;text-align:right;letter-spacing:-0.7px;">520</div><div style="left:3px;top:359px;width:901px;height:1px;background:#e8e8e8;"></div><svg style="left:221px;top:347px" width="7" height="11" viewBox="0 0 7 11"><path d="M1.5 1.5 L5.5 5.5 L1.5 9.5 Z" fill="#fff" stroke="#a0a0a0" stroke-width="1" stroke-linejoin="miter"/></svg><svg style="left:239px;top:348px" width="10" height="9" viewBox="0 0 10 9"><path d="M4.3 0.5 L8.6 3.9 L4.7 7.6 L4.5 5.9 C2 5.9 0.4 4 0.4 1.4 L1.5 0.4 L2.7 1.5 C2.9 2.4 3.4 2.8 4.4 2.7 Z" fill="url(#bl)" stroke="#2366a8" stroke-width="1" stroke-linejoin="round"/></svg><div class="t" style="left:255px;top:342px;line-height:18px;height:18px;letter-spacing:-0.059px;">java.net.Inet4Address.&lt;init&gt;:1</div><div class="t" style="left:692px;top:342px;line-height:18px;height:18px;width:66.9px;text-align:right;letter-spacing:-0.62px;">14,976</div><div class="t" style="left:762px;top:342px;line-height:18px;height:18px;width:66.3px;text-align:right;letter-spacing:-0.7px;">624</div><div style="left:3px;top:377px;width:901px;height:1px;background:#e8e8e8;"></div><svg style="left:221px;top:365px" width="7" height="11" viewBox="0 0 7 11"><path d="M1.5 1.5 L5.5 5.5 L1.5 9.5 Z" fill="#fff" stroke="#a0a0a0" stroke-width="1" stroke-linejoin="miter"/></svg><svg style="left:239px;top:366px" width="10" height="9" viewBox="0 0 10 9"><path d="M4.3 0.5 L8.6 3.9 L4.7 7.6 L4.5 5.9 C2 5.9 0.4 4 0.4 1.4 L1.5 0.4 L2.7 1.5 C2.9 2.4 3.4 2.8 4.4 2.7 Z" fill="url(#bl)" stroke="#2366a8" stroke-width="1" stroke-linejoin="round"/></svg><div class="t" style="left:255px;top:360px;line-height:18px;height:18px;letter-spacing:-0.059px;">java.net.Inet6Address.&lt;init&gt;:1</div><div class="t" style="left:692px;top:360px;line-height:18px;height:18px;width:66.9px;text-align:right;letter-spacing:-0.62px;">12,480</div><div class="t" style="left:762px;top:360px;line-height:18px;height:18px;width:66.3px;text-align:right;letter-spacing:-0.7px;">520</div><div style="left:3px;top:395px;width:901px;height:1px;background:#e8e8e8;"></div><svg style="left:198px;top:381px" width="13" height="13" viewBox="0 0 13 13"><path d="M6.5 0.6 L12.4 6.5 L6.5 12.4 L0.6 6.5 Z" fill="url(#dg)" stroke="#c49838" stroke-width="1"/><path d="M6.5 1.5 V11.5 M1.5 6.5 H11.5" stroke="#fff8e0" stroke-width="1" opacity=".9"/></svg><div class="t" style="left:217px;top:378px;line-height:18px;height:18px;letter-spacing:-0.077px;">java.net.NetworkInterface.getNetworkInterfaces:15</div><div class="t" style="left:692px;top:378px;line-height:18px;height:18px;width:66.9px;text-align:right;letter-spacing:-0.62px;">2,496</div><div class="t" style="left:762px;top:378px;line-height:18px;height:18px;width:66.3px;text-align:right;letter-spacing:-0.7px;">104</div><div style="left:3px;top:413px;width:901px;height:1px;background:#e8e8e8;"></div><svg style="left:164px;top:401px" width="7" height="11" viewBox="0 0 7 11"><path d="M1.5 1.5 L5.5 5.5 L1.5 9.5 Z" fill="#fff" stroke="#a0a0a0" stroke-width="1" stroke-linejoin="miter"/></svg><svg style="left:182px;top:402px" width="10" height="9" viewBox="0 0 10 9"><path d="M4.3 0.5 L8.6 3.9 L4.7 7.6 L4.5 5.9 C2 5.9 0.4 4 0.4 1.4 L1.5 0.4 L2.7 1.5 C2.9 2.4 3.4 2.8 4.4 2.7 Z" fill="url(#bl)" stroke="#2366a8" stroke-width="1" stroke-linejoin="round"/></svg><div class="t" style="left:198px;top:396px;line-height:18px;height:18px;letter-spacing:-0.043px;">com.prosyst.mbs.impl.network.generic.NetworkInterfacesManager.checkAdapters0:238</div><div class="t" style="left:692px;top:396px;line-height:18px;height:18px;width:66.9px;text-align:right;letter-spacing:-0.62px;">101,504</div><div class="t" style="left:762px;top:396px;line-height:18px;height:18px;width:66.3px;text-align:right;letter-spacing:-0.7px;">4,368</div><div style="left:3px;top:431px;width:901px;height:1px;background:#e8e8e8;"></div><svg style="left:164px;top:419px" width="7" height="11" viewBox="0 0 7 11"><path d="M1.5 1.5 L5.5 5.5 L1.5 9.5 Z" fill="#fff" stroke="#a0a0a0" stroke-width="1" stroke-linejoin="miter"/></svg><svg style="left:182px;top:420px" width="10" height="9" viewBox="0 0 10 9"><path d="M4.3 0.5 L8.6 3.9 L4.7 7.6 L4.5 5.9 C2 5.9 0.4 4 0.4 1.4 L1.5 0.4 L2.7 1.5 C2.9 2.4 3.4 2.8 4.4 2.7 Z" fill="url(#bl)" stroke="#2366a8" stroke-width="1" stroke-linejoin="round"/></svg><div class="t" style="left:198px;top:414px;line-height:18px;height:18px;letter-spacing:-0.043px;">com.prosyst.mbs.impl.network.generic.NetworkInterfacesManager.checkAdapters0:224</div><div class="t" style="left:692px;top:414px;line-height:18px;height:18px;width:66.9px;text-align:right;letter-spacing:-0.62px;">69,888</div><div class="t" style="left:762px;top:414px;line-height:18px;height:18px;width:66.3px;text-align:right;letter-spacing:-0.7px;">1,664</div><div style="left:3px;top:449px;width:901px;height:1px;background:#e8e8e8;"></div><svg style="left:164px;top:437px" width="7" height="11" viewBox="0 0 7 11"><path d="M1.5 1.5 L5.5 5.5 L1.5 9.5 Z" fill="#fff" stroke="#a0a0a0" stroke-width="1" stroke-linejoin="miter"/></svg><svg style="left:179px;top:435px" width="13" height="13" viewBox="0 0 13 13"><path d="M6.5 0.6 L12.4 6.5 L6.5 12.4 L0.6 6.5 Z" fill="url(#dg)" stroke="#c49838" stroke-width="1"/><path d="M6.5 1.5 V11.5 M1.5 6.5 H11.5" stroke="#fff8e0" stroke-width="1" opacity=".9"/></svg><div class="t" style="left:198px;top:432px;line-height:18px;height:18px;letter-spacing:-0.043px;">com.prosyst.mbs.impl.network.generic.NetworkInterfacesManager.checkAdapters0:216</div><div class="t" style="left:692px;top:432px;line-height:18px;height:18px;width:66.9px;text-align:right;letter-spacing:-0.62px;">6,656</div><div class="t" style="left:762px;top:432px;line-height:18px;height:18px;width:66.3px;text-align:right;letter-spacing:-0.7px;">208</div><div style="left:3px;top:467px;width:901px;height:1px;background:#e8e8e8;"></div><svg style="left:164px;top:455px" width="7" height="11" viewBox="0 0 7 11"><path d="M1.5 1.5 L5.5 5.5 L1.5 9.5 Z" fill="#fff" stroke="#a0a0a0" stroke-width="1" stroke-linejoin="miter"/></svg><svg style="left:182px;top:456px" width="10" height="9" viewBox="0 0 10 9"><path d="M4.3 0.5 L8.6 3.9 L4.7 7.6 L4.5 5.9 C2 5.9 0.4 4 0.4 1.4 L1.5 0.4 L2.7 1.5 C2.9 2.4 3.4 2.8 4.4 2.7 Z" fill="url(#bl)" stroke="#2366a8" stroke-width="1" stroke-linejoin="round"/></svg><div class="t" style="left:198px;top:450px;line-height:18px;height:18px;letter-spacing:-0.054px;">com.prosyst.mbs.impl.network.generic.NetworkInterfacesManager.checkAdapters0:241</div><div class="t" style="left:692px;top:450px;line-height:18px;height:18px;width:66.9px;text-align:right;letter-spacing:-0.62px;">4,992</div><div class="t" style="left:762px;top:450px;line-height:18px;height:18px;width:66.3px;text-align:right;letter-spacing:-0.7px;">104</div><div style="left:3px;top:485px;width:901px;height:1px;background:#e8e8e8;"></div><svg style="left:69px;top:473px" width="7" height="11" viewBox="0 0 7 11"><path d="M1.5 1.5 L5.5 5.5 L1.5 9.5 Z" fill="#fff" stroke="#a0a0a0" stroke-width="1" stroke-linejoin="miter"/></svg><svg style="left:87px;top:474px" width="10" height="9" viewBox="0 0 10 9"><path d="M4.3 0.5 L8.6 3.9 L4.7 7.6 L4.5 5.9 C2 5.9 0.4 4 0.4 1.4 L1.5 0.4 L2.7 1.5 C2.9 2.4 3.4 2.8 4.4 2.7 Z" fill="url(#bl)" stroke="#2366a8" stroke-width="1" stroke-linejoin="round"/></svg><div class="t" style="left:103px;top:468px;line-height:18px;height:18px;letter-spacing:-0.058px;">com.prosyst.mbs.impl.services.upnp.cp.Cache.timer:398</div><div class="t" style="left:692px;top:468px;line-height:18px;height:18px;width:66.9px;text-align:right;letter-spacing:-0.62px;">1,064</div><div class="t" style="left:762px;top:468px;line-height:18px;height:18px;width:66.3px;text-align:right;letter-spacing:-0.7px;">11</div><div style="left:3px;top:503px;width:901px;height:1px;background:#e8e8e8;"></div><svg style="left:69px;top:491px" width="7" height="11" viewBox="0 0 7 11"><path d="M1.5 1.5 L5.5 5.5 L1.5 9.5 Z" fill="#fff" stroke="#a0a0a0" stroke-width="1" stroke-linejoin="miter"/></svg><svg style="left:87px;top:492px" width="10" height="9" viewBox="0 0 10 9"><path d="M4.3 0.5 L8.6 3.9 L4.7 7.6 L4.5 5.9 C2 5.9 0.4 4 0.4 1.4 L1.5 0.4 L2.7 1.5 C2.9 2.4 3.4 2.8 4.4 2.7 Z" fill="url(#bl)" stroke="#2366a8" stroke-width="1" stroke-linejoin="round"/></svg><div class="t" style="left:103px;top:486px;line-height:18px;height:18px;letter-spacing:-0.111px;">com.prosyst.mbs.impl.services.event.ASynchQueue.timer:219</div><div class="t" style="left:692px;top:486px;line-height:18px;height:18px;width:66.9px;text-align:right;letter-spacing:-0.62px;">480</div><div class="t" style="left:762px;top:486px;line-height:18px;height:18px;width:66.3px;text-align:right;letter-spacing:-0.7px;">6</div><div style="left:3px;top:521px;width:901px;height:1px;background:#e8e8e8;"></div><svg style="left:50px;top:509px" width="7" height="11" viewBox="0 0 7 11"><path d="M1.5 1.5 L5.5 5.5 L1.5 9.5 Z" fill="#fff" stroke="#a0a0a0" stroke-width="1" stroke-linejoin="miter"/></svg><svg style="left:68px;top:510px" width="10" height="9" viewBox="0 0 10 9"><path d="M4.3 0.5 L8.6 3.9 L4.7 7.6 L4.5 5.9 C2 5.9 0.4 4 0.4 1.4 L1.5 0.4 L2.7 1.5 C2.9 2.4 3.4 2.8 4.4 2.7 Z" fill="url(#bl)" stroke="#2366a8" stroke-width="1" stroke-linejoin="round"/></svg><div class="t" style="left:84px;top:504px;line-height:18px;height:18px;letter-spacing:-0.131px;">com.prosyst.mbs.impl.services.upnp.export.RequestParser.run:82</div><div class="t" style="left:692px;top:504px;line-height:18px;height:18px;width:66.9px;text-align:right;letter-spacing:-0.62px;">337,408</div><div class="t" style="left:762px;top:504px;line-height:18px;height:18px;width:66.3px;text-align:right;letter-spacing:-0.7px;">5,407</div><div style="left:3px;top:539px;width:901px;height:1px;background:#e8e8e8;"></div><svg style="left:50px;top:527px" width="7" height="11" viewBox="0 0 7 11"><path d="M1.5 1.5 L5.5 5.5 L1.5 9.5 Z" fill="#fff" stroke="#a0a0a0" stroke-width="1" stroke-linejoin="miter"/></svg><svg style="left:68px;top:528px" width="10" height="9" viewBox="0 0 10 9"><path d="M4.3 0.5 L8.6 3.9 L4.7 7.6 L4.5 5.9 C2 5.9 0.4 4 0.4 1.4 L1.5 0.4 L2.7 1.5 C2.9 2.4 3.4 2.8 4.4 2.7 Z" fill="url(#bl)" stroke="#2366a8" stroke-width="1" stroke-linejoin="round"/></svg><div class="t" style="left:84px;top:522px;line-height:18px;height:18px;letter-spacing:-0.108px;">com.prosyst.mbs.impl.services.upnp.cp.RequestProcessor.run:78</div><div class="t" style="left:692px;top:522px;line-height:18px;height:18px;width:66.9px;text-align:right;letter-spacing:-0.62px;">313,832</div><div class="t" style="left:762px;top:522px;line-height:18px;height:18px;width:66.3px;text-align:right;letter-spacing:-0.7px;">6,934</div><div style="left:3px;top:557px;width:901px;height:1px;background:#e8e8e8;"></div><svg style="left:50px;top:545px" width="7" height="11" viewBox="0 0 7 11"><path d="M1.5 1.5 L5.5 5.5 L1.5 9.5 Z" fill="#fff" stroke="#a0a0a0" stroke-width="1" stroke-linejoin="miter"/></svg><svg style="left:68px;top:546px" width="10" height="9" viewBox="0 0 10 9"><path d="M4.3 0.5 L8.6 3.9 L4.7 7.6 L4.5 5.9 C2 5.9 0.4 4 0.4 1.4 L1.5 0.4 L2.7 1.5 C2.9 2.4 3.4 2.8 4.4 2.7 Z" fill="url(#bl)" stroke="#2366a8" stroke-width="1" stroke-linejoin="round"/></svg><div class="t" style="left:84px;top:540px;line-height:18px;height:18px;letter-spacing:-0.108px;">com.prosyst.mbs.impl.services.upnp.cp.RequestProcessor.run:90</div><div class="t" style="left:692px;top:540px;line-height:18px;height:18px;width:66.9px;text-align:right;letter-spacing:-0.62px;">24,128</div><div class="t" style="left:762px;top:540px;line-height:18px;height:18px;width:66.3px;text-align:right;letter-spacing:-0.7px;">371</div><svg style="left:50px;top:563px" width="7" height="11" viewBox="0 0 7 11"><path d="M1.5 1.5 L5.5 5.5 L1.5 9.5 Z" fill="#fff" stroke="#a0a0a0" stroke-width="1" stroke-linejoin="miter"/></svg><svg style="left:68px;top:564px" width="10" height="9" viewBox="0 0 10 9"><path d="M4.3 0.5 L8.6 3.9 L4.7 7.6 L4.5 5.9 C2 5.9 0.4 4 0.4 1.4 L1.5 0.4 L2.7 1.5 C2.9 2.4 3.4 2.8 4.4 2.7 Z" fill="url(#bl)" stroke="#2366a8" stroke-width="1" stroke-linejoin="round"/></svg><div class="t" style="left:84px;top:558px;line-height:18px;height:18px;letter-spacing:-0.074px;height:15px;overflow:hidden;">com.prosyst.mbs.services.cm.util.CMAsynchDispatcher.run:136</div><div class="t" style="left:692px;top:558px;line-height:18px;height:18px;width:66.9px;text-align:right;letter-spacing:-0.62px;height:15px;overflow:hidden;">2,952</div><div class="t" style="left:762px;top:558px;line-height:18px;height:18px;width:66.3px;text-align:right;letter-spacing:-0.7px;height:15px;overflow:hidden;">69</div><div style="left:905px;top:66px;width:16px;height:507px;background:#f0f0f0;"></div><div style="left:905px;top:119px;width:15px;height:307px;background:#cdcdcd;"></div><svg style="left:907px;top:71px" width="10" height="8" viewBox="0 0 10 8"><path d="M1.3 6 L5 2.3 L8.7 6" fill="none" stroke="#505050" stroke-width="2"/></svg><svg style="left:907px;top:560px" width="10" height="8" viewBox="0 0 10 8"><path d="M1.3 1.6 L5 5.3 L8.7 1.6" fill="none" stroke="#505050" stroke-width="2"/></svg></body></html>
